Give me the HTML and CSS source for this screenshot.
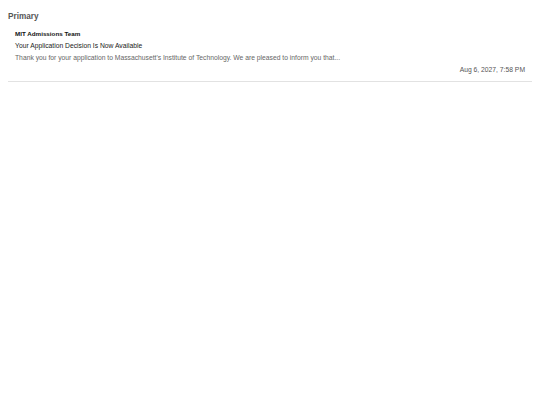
FILE: index.html
```html
<!DOCTYPE html>
<html>
<head>
<meta charset="utf-8">
<link rel="stylesheet" href="styles.css">
</head>
<body>
<div class="inbox">
  <h2 class="section-title">Primary</h2>
  <div class="mail">
    <div class="sender">MIT Admissions Team</div>
    <div class="subject">Your Application Decision Is Now Available</div>
    <div class="preview">Thank you for your application to Massachusett's Institute of Technology. We are pleased to inform you that...</div>
    <div class="date">Aug 6, 2027, 7:58 PM</div>
  </div>
</div>
</body>
</html>
```
FILE: styles.css
```css
html, body {
  margin: 0;
  padding: 0;
  background: #fff;
}
body {
  padding: 8px;
  font-family: "Liberation Sans", Arial, sans-serif;
}
.section-title {
  margin: 3px 0 5px 0;
  font-size: 8.2px;
  line-height: 12px;
  font-weight: 600;
  color: #555;
}
.mail {
  padding: 0 7px 5px 7px;
  border-bottom: 1px solid #e2e2e2;
}
.sender {
  font-size: 6.25px;
  line-height: 12px;
  font-weight: bold;
  color: #111;
}
.subject {
  font-size: 6.75px;
  line-height: 12px;
  color: #222;
}
.preview {
  font-size: 6.75px;
  line-height: 12px;
  color: #666;
}
.date {
  font-size: 6.75px;
  line-height: 12px;
  color: #555;
  text-align: right;
}
```
